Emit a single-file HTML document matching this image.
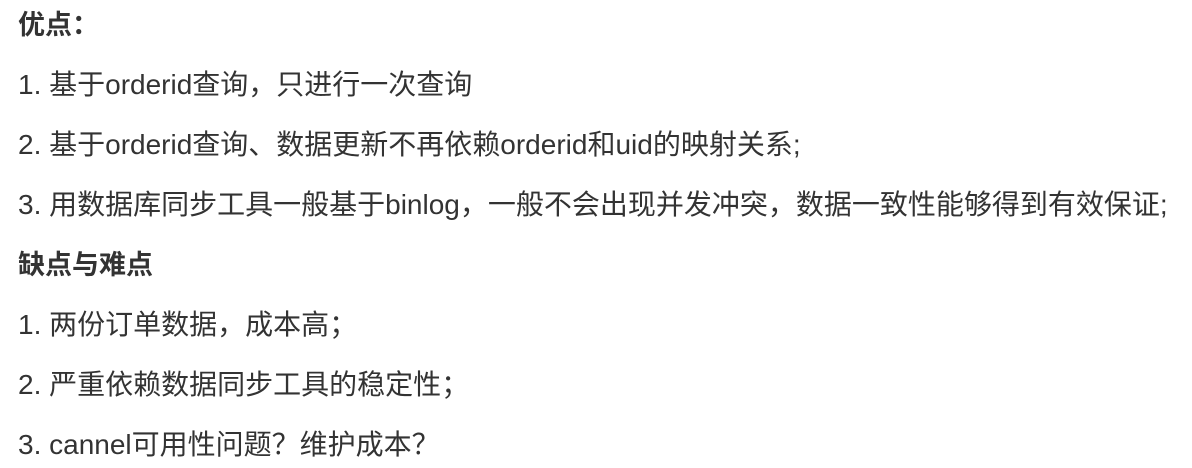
<!DOCTYPE html>
<html><head><meta charset="utf-8"><style>
body{margin:0;background:#fff;width:1192px;height:468px;overflow:hidden;}
.l{position:absolute;left:18px;font-family:"Liberation Sans","Noto Sans CJK SC",sans-serif;font-size:28px;color:#333;white-space:nowrap;line-height:30px;}
.b{font-weight:bold;font-size:27px;}
</style></head><body>
<div class="l b" style="top:10px">优点：</div>
<div class="l" style="top:70px">1. 基于orderid查询，只进行一次查询</div>
<div class="l" style="top:130px">2. 基于orderid查询、数据更新不再依赖orderid和uid的映射关系;</div>
<div class="l" style="top:190px">3. 用数据库同步工具一般基于binlog，一般不会出现并发冲突，数据一致性能够得到有效保证;</div>
<div class="l b" style="top:250px">缺点与难点</div>
<div class="l" style="top:310px">1. 两份订单数据，成本高；</div>
<div class="l" style="top:370px">2. 严重依赖数据同步工具的稳定性；</div>
<div class="l" style="top:430px">3. cannel可用性问题？维护成本？</div>
</body></html>
